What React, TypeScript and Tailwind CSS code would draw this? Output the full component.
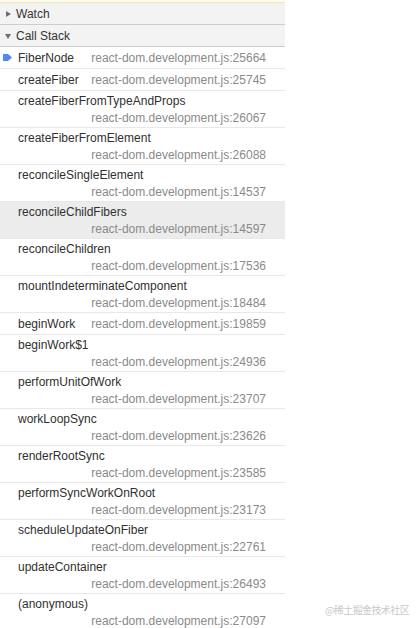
import React from "react";

type Frame = { name: string; loc: string; current?: boolean; hl?: boolean };

const frames: Frame[] = [
  { name: "FiberNode", loc: "react-dom.development.js:25664", current: true },
  { name: "createFiber", loc: "react-dom.development.js:25745" },
  { name: "createFiberFromTypeAndProps", loc: "react-dom.development.js:26067" },
  { name: "createFiberFromElement", loc: "react-dom.development.js:26088" },
  { name: "reconcileSingleElement", loc: "react-dom.development.js:14537" },
  { name: "reconcileChildFibers", loc: "react-dom.development.js:14597", hl: true },
  { name: "reconcileChildren", loc: "react-dom.development.js:17536" },
  { name: "mountIndeterminateComponent", loc: "react-dom.development.js:18484" },
  { name: "beginWork", loc: "react-dom.development.js:19859" },
  { name: "beginWork$1", loc: "react-dom.development.js:24936" },
  { name: "performUnitOfWork", loc: "react-dom.development.js:23707" },
  { name: "workLoopSync", loc: "react-dom.development.js:23626" },
  { name: "renderRootSync", loc: "react-dom.development.js:23585" },
  { name: "performSyncWorkOnRoot", loc: "react-dom.development.js:23173" },
  { name: "scheduleUpdateOnFiber", loc: "react-dom.development.js:22761" },
  { name: "updateContainer", loc: "react-dom.development.js:26493" },
  { name: "(anonymous)", loc: "react-dom.development.js:27097" },
];

function Tri({ open }: { open?: boolean }) {
  return (
    <svg width="6" height="6" viewBox="0 0 6 6" className="shrink-0">
      {open ? (
        <polygon points="0,1 6,1 3,6" fill="#6e6e6e" />
      ) : (
        <polygon points="1,0 6,3 1,6" fill="#6e6e6e" />
      )}
    </svg>
  );
}

export default function App() {
  return (
    <div
      className="relative w-[418px] h-[628px] overflow-hidden bg-white text-[12px]"
      style={{ fontFamily: '"Liberation Sans", Arial, sans-serif' }}
    >
      <div className="w-[285px]">
        <div className="h-[3px] bg-[#fffbe6] border-b border-[#f0e8c0]" />
        <div className="h-[22px] flex items-center gap-[5px] pl-[5px] bg-[#f3f3f3] border-b border-[#cdcdcd] text-[#333]">
          <Tri />
          <span>Watch</span>
        </div>
        <div className="h-[22px] flex items-center gap-[5px] pl-[5px] bg-[#f3f3f3] border-b border-[#cdcdcd] text-[#333]">
          <Tri open />
          <span>Call Stack</span>
        </div>
        {frames.map((f, i) => (
          <div
            key={i}
            className={`relative flex flex-wrap items-center gap-y-[2px] pl-[18px] pr-[19px] pt-[3px] pb-[1px] min-h-[22px] border-b border-[#e8e8e8] leading-[15px] ${
              f.hl ? "bg-[#ececec]" : "bg-white"
            }`}
          >
            {f.current && (
              <svg
                width="9"
                height="9"
                viewBox="0 0 9 9"
                className="absolute left-[3px] top-[6px]"
              >
                <polygon points="0,1 5,1 9,4.5 5,8 0,8" fill="#4a8af4" />
              </svg>
            )}
            <span className="text-[#303030] mr-[6px] whitespace-nowrap">{f.name}</span>
            <span className="ml-auto text-[#8a8a8a] whitespace-nowrap">{f.loc}</span>
          </div>
        ))}
      </div>
      <div
        className="absolute left-[325px] top-[602px] text-[10px] tracking-[-0.6px] text-[#c8c8c8] whitespace-nowrap"
        style={{ fontFamily: '"Noto Sans CJK SC", "Liberation Sans", sans-serif' }}
      >
        @稀土掘金技术社区
      </div>
    </div>
  );
}
